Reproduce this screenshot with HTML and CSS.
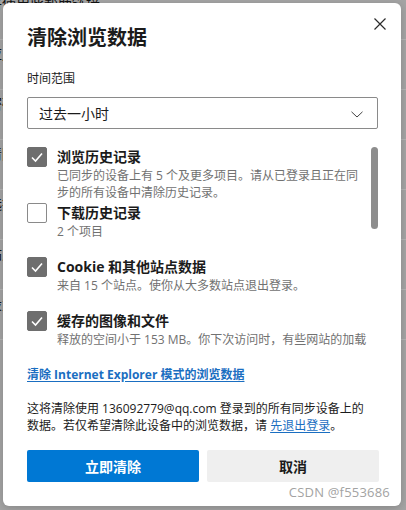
FILE: index.html
```html
<!DOCTYPE html>
<html lang="zh-CN">
<head>
<meta charset="utf-8">
<title>清除浏览数据</title>
<link rel="stylesheet" href="styles.css">
</head>
<body>
<div class="page">
  <div class="page-row">将使用此帮助链接</div>
  <div class="page-row">应用</div>
  <div class="page-row">密码</div>
  <div class="page-row">清除</div>
  <div class="page-row">选择</div>
  <div class="page-row">站点</div>
  <div class="page-row">设置</div>
</div>

<div class="dialog" role="dialog" aria-label="清除浏览数据">
  <button class="close" aria-label="关闭">
    <svg width="12" height="12" viewBox="0 0 12 12"><path d="M0.5 0.5L11.5 11.5M11.5 0.5L0.5 11.5" stroke="#2b2b2b" stroke-width="1.2" fill="none"/></svg>
  </button>
  <h1 class="title">清除浏览数据</h1>
  <div class="field-label">时间范围</div>
  <div class="select">
    <span>过去一小时</span>
    <svg class="chev" width="12" height="7" viewBox="0 0 12 7"><path d="M0.5 0.8L6 6L11.5 0.8" stroke="#444" stroke-width="1" fill="none"/></svg>
  </div>

  <div class="list">
    <div class="item">
      <span class="box checked"><svg width="20" height="20" viewBox="0 0 20 20"><path d="M5 10.5L8.5 14L15 6.5" stroke="#fff" stroke-width="1.6" fill="none"/></svg></span>
      <div class="text">
        <div class="name">浏览历史记录</div>
        <div class="desc">已同步的设备上有 5 个及更多项目。请从已登录且正在同步的所有设备中清除历史记录。</div>
      </div>
    </div>
    <div class="item">
      <span class="box"></span>
      <div class="text">
        <div class="name">下载历史记录</div>
        <div class="desc">2 个项目</div>
      </div>
    </div>
    <div class="item">
      <span class="box checked"><svg width="20" height="20" viewBox="0 0 20 20"><path d="M5 10.5L8.5 14L15 6.5" stroke="#fff" stroke-width="1.6" fill="none"/></svg></span>
      <div class="text">
        <div class="name">Cookie 和其他站点数据</div>
        <div class="desc">来自 15 个站点。使你从大多数站点退出登录。</div>
      </div>
    </div>
    <div class="item">
      <span class="box checked"><svg width="20" height="20" viewBox="0 0 20 20"><path d="M5 10.5L8.5 14L15 6.5" stroke="#fff" stroke-width="1.6" fill="none"/></svg></span>
      <div class="text">
        <div class="name">缓存的图像和文件</div>
        <div class="desc">释放的空间小于 153 MB。你下次访问时，有些网站的加载速度可能会变慢。</div>
      </div>
    </div>
    <div class="item">
      <span class="box"></span>
      <div class="text">
        <div class="name">密码</div>
        <div class="desc">无</div>
      </div>
    </div>
    <div class="thumb"></div>
  </div>

  <a class="ie-link" href="#">清除 Internet Explorer 模式的浏览数据</a>

  <p class="note">这将清除使用 136092779@qq.com 登录到的所有同步设备上的数据。若仅希望清除此设备中的浏览数据，请 <a href="#">先退出登录</a>。</p>

  <div class="actions">
    <button class="btn primary">立即清除</button>
    <button class="btn secondary">取消</button>
  </div>

  <div class="watermark">CSDN @f553686</div>
</div>
</body>
</html>
```

FILE: styles.css
```css
* { box-sizing: border-box; }

html, body {
  margin: 0;
  width: 406px;
  height: 510px;
  overflow: hidden;
}

body {
  background: #a4a4a4;
  font-family: "Open Sans", "Noto Sans CJK SC", sans-serif;
  color: #1b1b1b;
  position: relative;
}

.page {
  margin-top: -10px;
  color: #111;
  font-size: 14px;
}

.page-row {
  height: 50px;
  line-height: 20px;
  padding-top: 4px;
  margin-left: -12px;
  border-bottom: 1px solid #b4b4b4;
}

.dialog {
  position: absolute;
  left: 3px;
  top: 3px;
  width: 398px;
  height: 503px;
  background: #fff;
  border-radius: 6px;
  box-shadow: 0 2px 8px rgba(0, 0, 0, 0.18);
  padding: 21px 23px 0 24px;
}

.close {
  position: absolute;
  right: 11px;
  top: 11px;
  width: 20px;
  height: 20px;
  padding: 4px;
  border: 0;
  background: transparent;
  display: flex;
}

.title {
  margin: 0;
  font-size: 20px;
  line-height: 28px;
  font-weight: 700;
  color: #1b1b1b;
}

.field-label {
  margin-top: 17px;
  font-size: 12px;
  line-height: 20px;
  color: #1b1b1b;
}

.select {
  margin-top: 8px;
  height: 32px;
  border: 1px solid #8a8a8a;
  border-radius: 2px;
  padding: 0 14px 0 11px;
  display: flex;
  align-items: center;
  justify-content: space-between;
  font-size: 14px;
  color: #1b1b1b;
}

.chev { margin-top: 2px; }

.list {
  position: relative;
  margin-top: 18px;
  height: 200px;
  overflow: hidden;
  padding-right: 10px;
}

.item {
  display: flex;
  gap: 10px;
  min-height: 54px;
  padding-bottom: 2px;
}

.box {
  flex: none;
  width: 20px;
  height: 20px;
  border: 1px solid #8a8a8a;
  border-radius: 2px;
  background: #fff;
  display: flex;
}

.box.checked {
  background: #6e6e6e;
  border-color: #6e6e6e;
}

.box.checked svg { margin: -1px; }

.text { flex: 1; min-width: 0; }

.name {
  font-size: 14px;
  line-height: 20px;
  font-weight: 700;
  color: #1b1b1b;
}

.desc {
  font-size: 12px;
  line-height: 17px;
  color: #717171;
}

.thumb {
  position: absolute;
  right: 0;
  top: 0;
  width: 7px;
  height: 82px;
  border-radius: 4px;
  background: #8d8d8d;
}

.ie-link {
  display: inline-block;
  margin-top: 18px;
  font-size: 12px;
  line-height: 20px;
  font-weight: 700;
  color: #1a6ec1;
  text-decoration: underline;
  text-underline-offset: 2px;
}

.note {
  margin: 15px 8px 0 0;
  font-size: 12px;
  line-height: 17px;
  color: #1b1b1b;
}

.note a {
  color: #1a6ec1;
  text-decoration: underline;
  text-underline-offset: 2px;
}

.actions {
  margin-top: 16px;
  display: grid;
  grid-template-columns: 1fr 1fr;
  gap: 8px;
  margin-right: -1px;
}

.btn {
  height: 32px;
  border: 0;
  border-radius: 2px;
  font-family: inherit;
  font-size: 14px;
  font-weight: 700;
}

.btn.primary {
  background: #0078d4;
  color: #fff;
}

.btn.secondary {
  background: #efefef;
  color: #1b1b1b;
}

.watermark {
  position: absolute;
  right: 11px;
  bottom: 5px;
  font-size: 13px;
  color: #a3a3a3;
  letter-spacing: 0.2px;
}
```
